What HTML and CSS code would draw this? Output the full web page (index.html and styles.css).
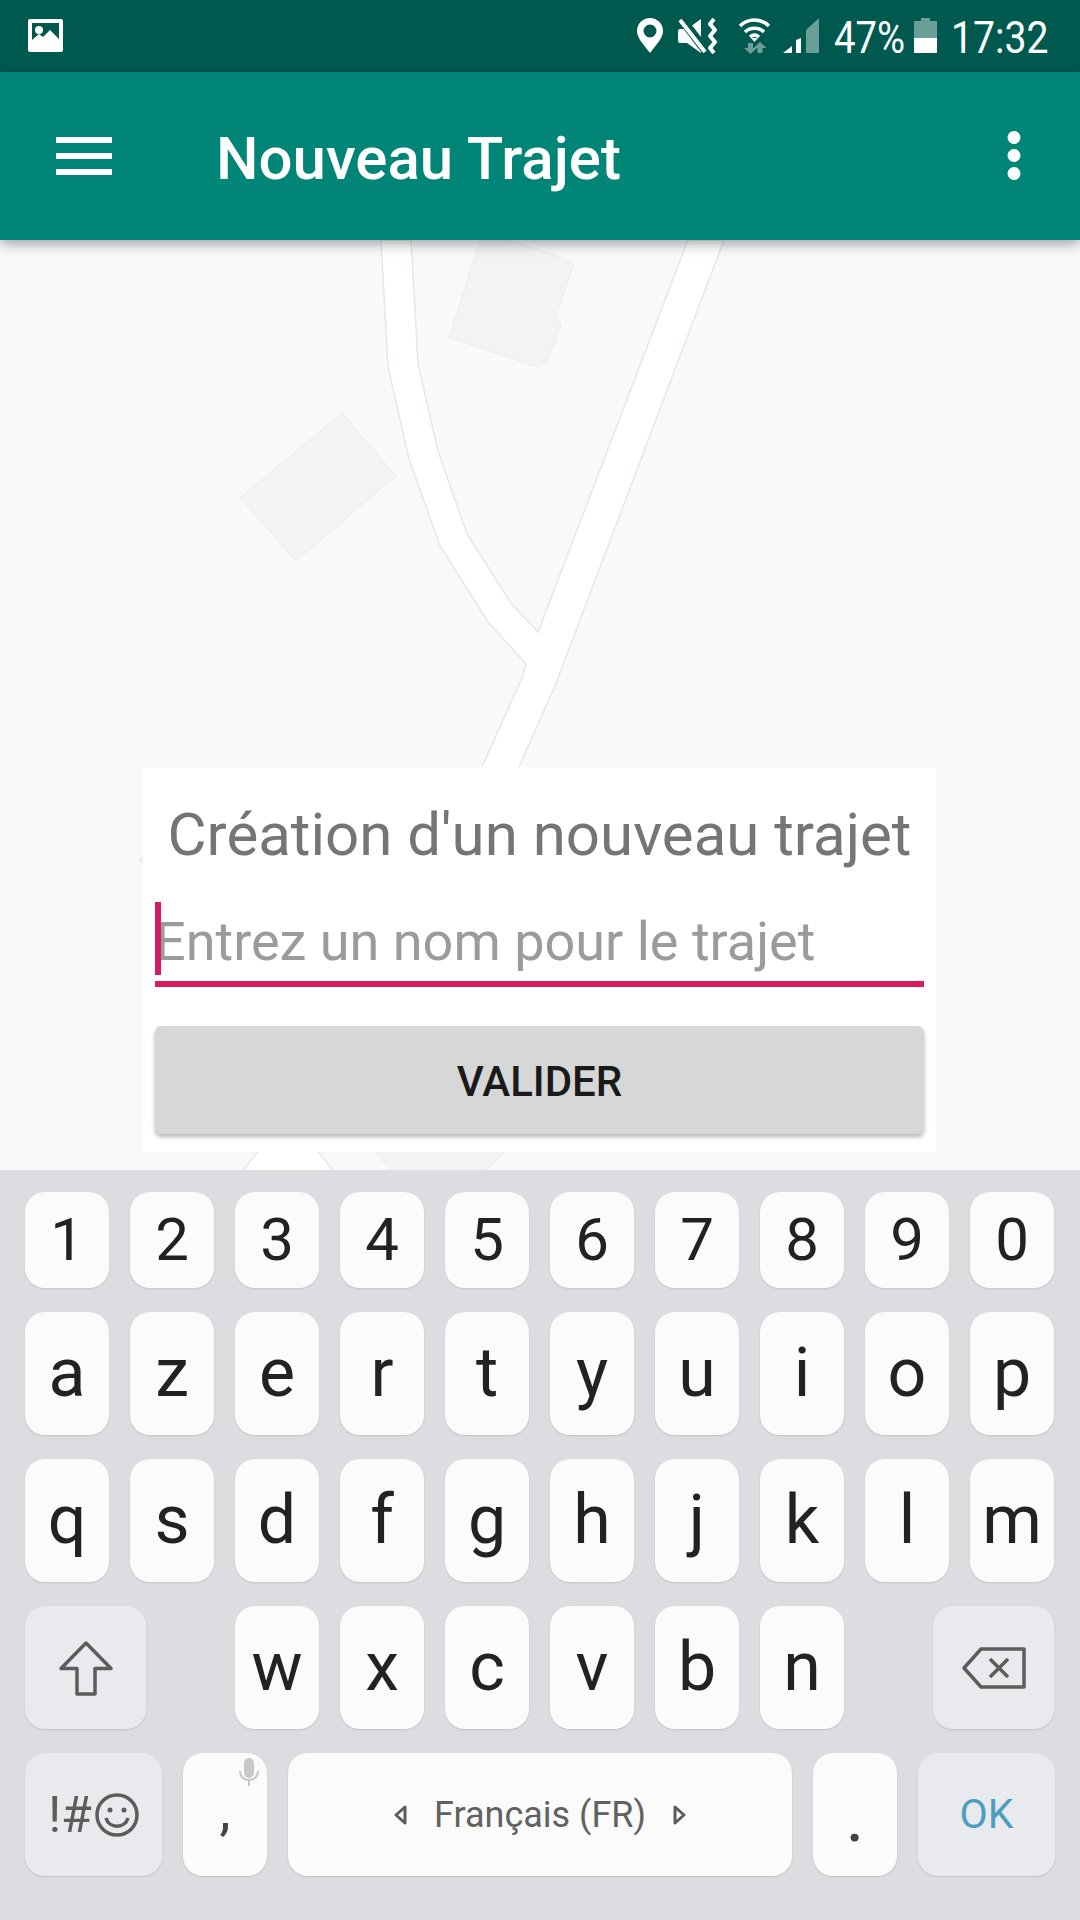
FILE: index.html
```html
<!DOCTYPE html>
<html lang="fr">
<head>
<meta charset="UTF-8" />
<meta name="viewport" content="width=device-width, initial-scale=1" />
<title>Nouveau Trajet</title>
<link rel="stylesheet" href="styles.css">
</head>
<body>

<!-- Status bar -->
<div class="status-bar">
  <svg class="status-gallery" width="35" height="72" viewBox="28 0 35 72">
    <path fill="#fff" fill-rule="evenodd" d="M30 19h31a2 2 0 0 1 2 2v29a2 2 0 0 1-2 2H30a2 2 0 0 1-2-2V21a2 2 0 0 1 2-2zM32 23v17l7-6 4 3 7-7 9 9V23z"/>
    <circle cx="39" cy="30" r="4" fill="#fff"/>
  </svg>
  <div class="status-right">
    <svg width="182" height="72" viewBox="637 0 182 72">
      <!-- pin -->
      <path fill="#fff" fill-rule="evenodd" d="M650 18a13 13 0 0 1 13 13c0 8-9 16-13 22-4-6-13-14-13-22a13 13 0 0 1 13-13zm0 6.500a6.500 6.500 0 1 0 0 13 6.500 6.500 0 0 0 0-13z"/>
      <!-- muted speaker -->
      <path fill="#fff" d="M680 29h7l14-10v34l-14-10h-7a2 2 0 0 1-2-2V31a2 2 0 0 1 2-2z"/>
      <path stroke="#00594f" stroke-width="9" d="M680 17l26 34"/>
      <path stroke="#fff" stroke-width="4" d="M680 20l25 32"/>
      <path fill="none" stroke="#fff" stroke-width="4" stroke-linejoin="round" d="M714 19l-4 5 5 6-5 6 5 6-5 6 4 5"/>
      <!-- wifi -->
      <g fill="none" stroke="#fff" stroke-width="3.500">
        <path d="M740 26c8-8 21-8 29 0"/>
        <path d="M745 32c5-5 14-5 19 0"/>
        <path d="M750 37c3-2.500 6-2.500 9 0"/>
      </g>
      <path fill="#fff" d="M751 38h7l-3.500 4z"/>
      <path fill="#6b9e96" d="M746 43v5h-4l6.500 6 6.500-6h-4v-5zM758 42l-6.500 6h4v5h5v-5h4z" transform="translate(2 0)"/>
      <!-- signal -->
      <path fill="#fff" d="M783 53l9-7v7zM796 40l5-2v15h-5z"/>
      <path fill="#6b9e96" d="M806 30l13-12v35h-13z"/>
    </svg>
    <span class="status-text status-battery-text">47%</span>
    <svg class="status-battery" width="23" height="72" viewBox="914 0 23 72">
      <path fill="#6b9e96" d="M921 18h9v3h7v17h-23V21h7z"/>
      <path fill="#fff" d="M914 38h23v15h-23z"/>
    </svg>
    <span class="status-text status-clock">17:32</span>
  </div>
</div>

<!-- App bar -->
<header class="app-bar">
  <svg class="menu-icon" width="56" height="38" viewBox="0 0 56 38">
    <path fill="#fff" d="M0 0h56v6H0zM0 16h56v6H0zM0 32h56v6H0z"/>
  </svg>
  <h1 class="app-title">Nouveau Trajet</h1>
  <svg class="more-icon" width="14" height="50" viewBox="0 0 14 50">
    <circle cx="7" cy="6.500" r="6.500" fill="#fff"/>
    <circle cx="7" cy="24.500" r="6.500" fill="#fff"/>
    <circle cx="7" cy="42.500" r="6.500" fill="#fff"/>
  </svg>
</header>

<!-- Map with dialog -->
<main class="map">
  <svg class="map-bg" width="1080" height="930" viewBox="0 240 1080 930">
    <g class="building">
      <path d="M480 240h29l43 14 22 9-18 52 5 10-14 37-9 5-89-29z"/>
      <path d="M342 413l54 63-100 85-56-63.500z"/>
      <path d="M362 1138l29 32v10h95v-10l33-32z"/>
    </g>
    <g class="road">
      <path d="M381 240l7 127 21 92 31 87 48 76 38 42-4 14-50 111h37l46-103 169-446h-36L538 632l-27-29-44-69-29-83-20-87-7-124z"/>
      <path d="M269 1138l-26 32v10h90v-10l-26-32z"/>
      <path d="M143 857l-3 3 3 3"/>
    </g>
  </svg>

  <section class="dialog">
    <h2 class="dialog-title">Création d'un nouveau trajet</h2>
    <div class="field">
      <span class="caret"></span>
      <span class="placeholder">Entrez un nom pour le trajet</span>
    </div>
    <button class="submit">VALIDER</button>
  </section>
</main>

<!-- Keyboard -->
<div class="keyboard">
  <div class="kb-row">
    <div class="key digit">1</div><div class="key digit">2</div><div class="key digit">3</div><div class="key digit">4</div><div class="key digit">5</div>
    <div class="key digit">6</div><div class="key digit">7</div><div class="key digit">8</div><div class="key digit">9</div><div class="key digit">0</div>
  </div>
  <div class="kb-row">
    <div class="key">a</div><div class="key">z</div><div class="key">e</div><div class="key">r</div><div class="key">t</div>
    <div class="key">y</div><div class="key">u</div><div class="key">i</div><div class="key">o</div><div class="key">p</div>
  </div>
  <div class="kb-row">
    <div class="key">q</div><div class="key">s</div><div class="key">d</div><div class="key">f</div><div class="key">g</div>
    <div class="key">h</div><div class="key">j</div><div class="key">k</div><div class="key">l</div><div class="key">m</div>
  </div>
  <div class="kb-row kb-row-split">
    <div class="key fn-key wide-key">
      <svg width="56" height="56" viewBox="0 0 56 56"><path class="key-icon" d="M28 3L3 28.500h16V54h18V28.500h16z"/></svg>
    </div>
    <div class="kb-group">
      <div class="key">w</div><div class="key">x</div><div class="key">c</div><div class="key">v</div><div class="key">b</div><div class="key">n</div>
    </div>
    <div class="key fn-key wide-key">
      <svg width="64" height="42" viewBox="0 0 64 42">
        <path class="key-icon" d="M19 2h43v38H19L2 21z"/>
        <path class="key-icon" d="M28 12l18 18M46 12L28 30"/>
      </svg>
    </div>
  </div>
  <div class="kb-row">
    <div class="key fn-key sym-key">
      <span class="sym-text">!#</span>
      <svg width="44" height="44" viewBox="0 0 44 44">
        <circle class="key-icon" cx="22" cy="22" r="20"/>
        <circle cx="15" cy="17" r="2.500" fill="#5c5c5c"/>
        <circle cx="29" cy="17" r="2.500" fill="#5c5c5c"/>
        <path class="key-icon" d="M11 25c3 11 19 11 22 0"/>
      </svg>
    </div>
    <div class="key punct comma-key">
      ,
      <svg class="mic" width="20" height="28" viewBox="0 0 20 28">
        <rect x="5" y="0" width="10" height="20" rx="5" fill="#c8c8c8"/>
        <path d="M1 13c0 12 18 12 18 0M10 21v7" fill="none" stroke="#c8c8c8" stroke-width="2"/>
      </svg>
    </div>
    <div class="key space-key">
      <svg width="13" height="20" viewBox="0 0 13 20"><path class="key-icon thin" d="M11 2v16L2 10z"/></svg>
      <span class="lang">Français (FR)</span>
      <svg width="13" height="20" viewBox="0 0 13 20"><path class="key-icon thin" d="M2 2v16l9-8z"/></svg>
    </div>
    <div class="key punct period-key">.</div>
    <div class="key fn-key ok-key">OK</div>
  </div>
</div>

</body>
</html>
```

FILE: styles.css
```css
* {
  box-sizing: border-box;
}

body {
  margin: 0;
  width: 1080px;
  height: 1920px;
  overflow: hidden;
  display: flex;
  flex-direction: column;
  font-family: Roboto, "Liberation Sans", sans-serif;
}

svg {
  display: block;
  flex: none;
}

/* Status bar */
.status-bar {
  height: 72px;
  flex: none;
  display: flex;
  justify-content: space-between;
  padding: 0 32px 0 28px;
  background: #00594f;
}

.status-right {
  display: flex;
}

.status-text {
  display: block;
  color: #fff;
  font-size: 45px;
  line-height: 75px;
  white-space: nowrap;
  transform-origin: left;
}

.status-battery-text {
  width: 70px;
  margin-left: 15px;
  transform: scaleX(0.85);
}

.status-battery {
  margin-left: 10px;
}

.status-clock {
  width: 97px;
  margin-left: 14px;
  transform: scaleX(0.87);
}

/* App bar */
.app-bar {
  height: 168px;
  flex: none;
  display: flex;
  align-items: center;
  padding: 0 59px 0 56px;
  background: #008577;
  box-shadow: 0 4px 12px rgba(0,0,0,0.35);
  position: relative;
  z-index: 2;
}

.app-title {
  margin: 0 0 0 104px;
  padding-top: 5px;
  color: #fff;
  font-size: 60px;
  font-weight: 500;
  line-height: 70px;
}

.more-icon {
  margin-left: auto;
}

/* Map */
.map {
  flex: 1;
  position: relative;
  background: #f8f9fb;
}

.building path {
  fill: #f2f3f5;
  stroke: #ebecee;
  stroke-width: 1;
}

.road path {
  fill: #fff;
  stroke: #e6e7ea;
  stroke-width: 1.5;
}

/* Dialog */
.dialog {
  position: absolute;
  left: 143px;
  top: 527px;
  width: 793px;
  padding: 33px 12px 18px;
  background: #fff;
}

.dialog-title {
  margin: 0 0 32px;
  color: #757575;
  font-size: 60px;
  font-weight: 400;
  line-height: 70px;
  text-align: center;
  white-space: nowrap;
}

.field {
  position: relative;
  padding: 8px 0 7px;
  border-bottom: 6px solid #d81b60;
}

.caret {
  position: absolute;
  left: 0;
  top: 0;
  width: 6px;
  height: 73px;
  background: #d81b60;
}

.placeholder {
  display: block;
  color: #9b9b9b;
  font-size: 54px;
  line-height: 64px;
  white-space: nowrap;
}

.submit {
  display: block;
  width: 100%;
  height: 108px;
  margin-top: 39px;
  padding: 2px 0 0;
  border: none;
  border-radius: 6px;
  background: #d6d7d7;
  box-shadow: 0 3px 4px rgba(0,0,0,0.28);
  color: #1a1a1a;
  font-family: inherit;
  font-size: 42px;
  font-weight: 500;
}

/* Keyboard */
.keyboard {
  height: 750px;
  flex: none;
  display: flex;
  flex-direction: column;
  gap: 24px;
  padding: 22px 25px 0;
  background: #dcdde1;
}

.kb-row {
  display: flex;
  gap: 21px;
}

.kb-row-split {
  justify-content: space-between;
  margin-right: 1px;
}

.kb-group {
  display: flex;
  gap: 21px;
}

.key {
  position: relative;
  flex: none;
  width: 84px;
  height: 123px;
  border-radius: 20px;
  background: #fbfbfb;
  box-shadow: 0 1px 2px rgba(0,0,0,0.12);
  color: #222;
  font-size: 68px;
  line-height: 123px;
  text-align: center;
}

.key.digit {
  height: 96px;
  font-size: 60px;
  line-height: 96px;
}

.fn-key {
  display: flex;
  align-items: center;
  justify-content: center;
  background: #e9eaee;
}

.wide-key {
  width: 121px;
}

.key-icon {
  fill: none;
  stroke: #5c5c5c;
  stroke-width: 3.5;
  stroke-linejoin: round;
}

.key-icon.thin {
  stroke-width: 3;
}

.sym-key {
  width: 137px;
  gap: 3px;
}

.sym-text {
  color: #5c5c5c;
  font-size: 50px;
  line-height: 56px;
}

.punct {
  color: #444;
}

.comma-key {
  font-size: 56px;
  line-height: 115px;
}

.mic {
  position: absolute;
  left: 56px;
  top: 5px;
}

.period-key {
  font-size: 72px;
  line-height: 128px;
}

.space-key {
  width: auto;
  flex: 1;
  display: flex;
  align-items: center;
  justify-content: center;
  gap: 27px;
}

.lang {
  color: #616161;
  font-size: 36px;
  line-height: 42px;
}

.ok-key {
  width: 137px;
  color: #4a9fc1;
  font-size: 41px;
}
```
